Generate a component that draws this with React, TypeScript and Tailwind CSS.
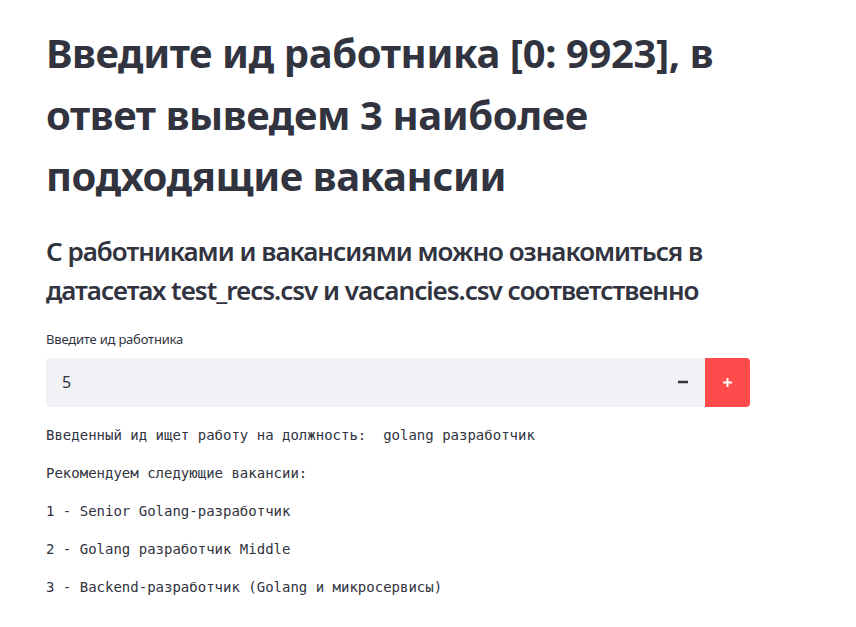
export default function App() {
  return (
    <div className="min-h-screen bg-white text-[#31333f] font-['Noto_Sans',sans-serif]">
      <div className="ml-[46px] w-[704px] pt-[22px]">
        <h1 className="text-[40px] font-bold leading-[61.5px] tracking-[-0.4px]">
          <span className="block whitespace-nowrap">Введите ид работника [0: 9923], в</span>
          <span className="block whitespace-nowrap">ответ выведем 3 наиболее</span>
          <span className="block whitespace-nowrap">подходящие вакансии</span>
        </h1>
        <h2 className="mt-[25px] text-[26px] font-semibold leading-[39px] tracking-[-1px]">
          <span className="block whitespace-nowrap">С работниками и вакансиями можно ознакомиться в</span>
          <span className="block whitespace-nowrap">датасетах test_recs.csv и vacancies.csv соответственно</span>
        </h2>
        <label className="mt-[19px] block text-[13px] leading-[20px] tracking-[-0.2px]">Введите ид работника</label>
        <div className="mt-[9px] flex h-[49px] overflow-hidden rounded-[4px] bg-[#f0f2f6]">
          <div className="flex flex-1 items-center pl-[16px] text-[16px]">5</div>
          <button className="flex w-[45px] items-center justify-center">
            <svg width="10" height="10" viewBox="0 0 10 10">
              <rect x="0" y="3.75" width="10" height="2.5" fill="#31333f" />
            </svg>
          </button>
          <button className="flex w-[45px] items-center justify-center bg-[#ff4b4b]">
            <svg width="9" height="9" viewBox="0 0 9 9">
              <rect x="0" y="3.5" width="9" height="2" fill="#ffffff" />
              <rect x="3.5" y="0" width="2" height="9" fill="#ffffff" />
            </svg>
          </button>
        </div>
        <div className="mt-[9px] font-['DejaVu_Sans_Mono',monospace] text-[14px] leading-[38px] whitespace-pre">
          <p>Введенный ид ищет работу на должность:  golang разработчик</p>
          <p>Рекомендуем следующие вакансии:</p>
          <p>1 - Senior Golang-разработчик</p>
          <p>2 - Golang разработчик Middle</p>
          <p>3 - Backend-разработчик (Golang и микросервисы)</p>
        </div>
      </div>
    </div>
  );
}
